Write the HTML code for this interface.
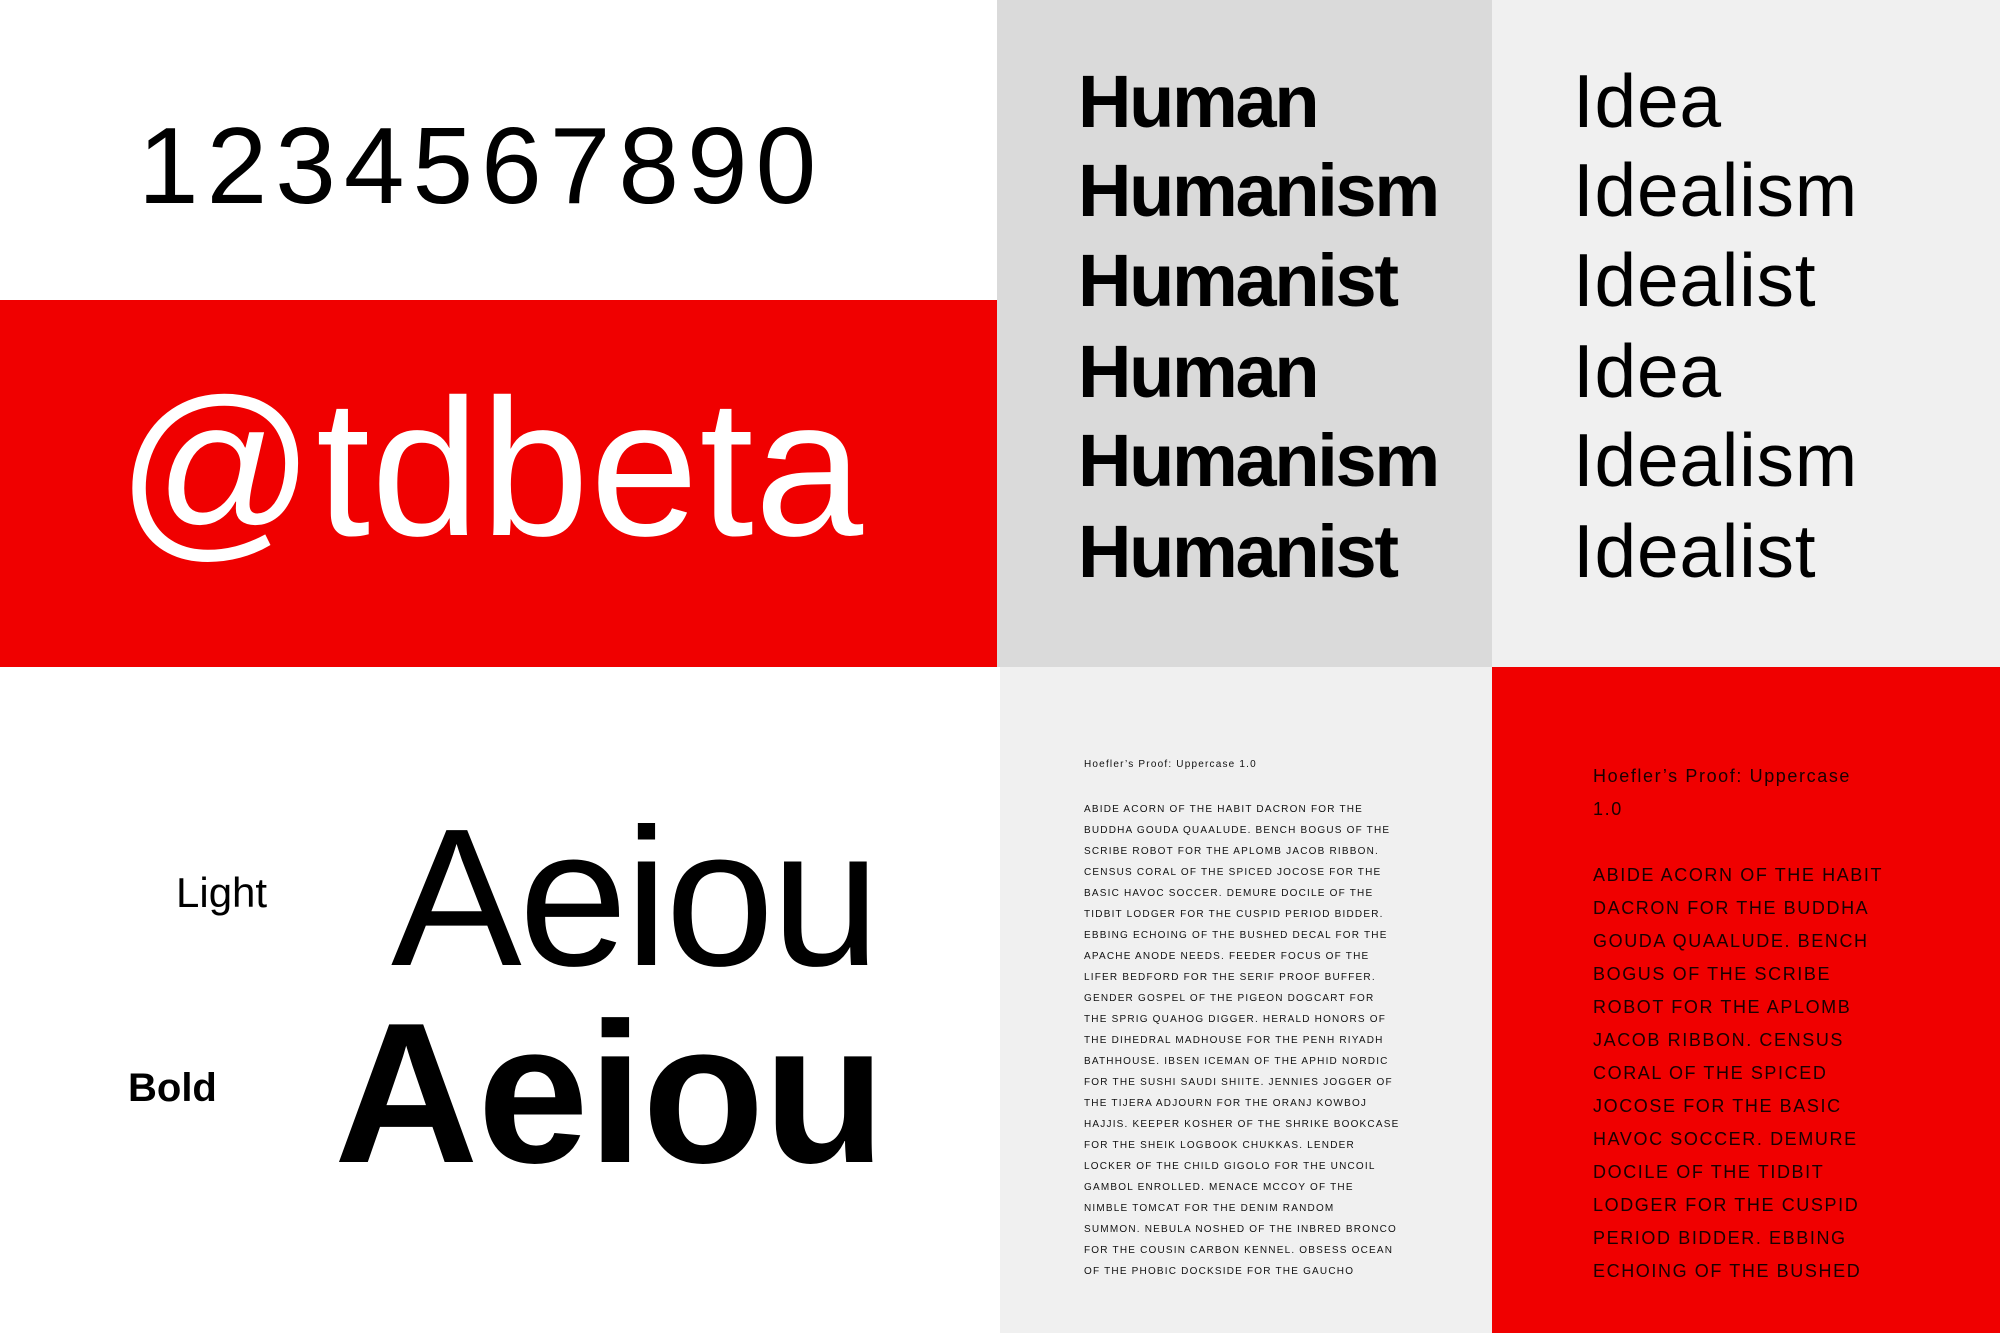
<!DOCTYPE html>
<html><head><meta charset="utf-8"><style>
html,body{margin:0;padding:0;}
body{width:2000px;height:1333px;position:relative;overflow:hidden;background:#fff;font-family:"Liberation Sans",sans-serif;color:#000;}
.a{position:absolute;white-space:nowrap;line-height:1;}
.bg{position:absolute;}
.h{font-weight:bold;font-size:74px;letter-spacing:-2.3px;left:1078px;}
.i{font-size:75px;letter-spacing:0.7px;left:1573px;}
.g{position:absolute;left:1084px;font-size:10px;line-height:21px;letter-spacing:1.2px;white-space:nowrap;color:#111;}
.r{position:absolute;left:1593px;font-size:18px;line-height:33px;letter-spacing:1.6px;white-space:nowrap;color:#1a0000;}
</style></head><body>
<div class="bg" style="left:0;top:300px;width:1000px;height:367px;background:#f00000"></div>
<div class="bg" style="left:997px;top:0;width:495px;height:667px;background:#dadada"></div>
<div class="bg" style="left:1492px;top:0;width:508px;height:667px;background:#f0f0f0"></div>
<div class="bg" style="left:1000px;top:667px;width:492px;height:666px;background:#f0f0f0"></div>
<div class="bg" style="left:1492px;top:667px;width:508px;height:666px;background:#f00000"></div>

<div class="a" style="left:138px;top:112px;font-size:109px;letter-spacing:8px">1234567890</div>
<div class="a" style="left:117px;top:371px;font-size:195px;letter-spacing:1px;color:#fff">@tdbeta</div>

<div class="a h" style="top:65px">Human</div>
<div class="a h" style="top:154px">Humanism</div>
<div class="a h" style="top:244px">Humanist</div>
<div class="a h" style="top:335px">Human</div>
<div class="a h" style="top:424px">Humanism</div>
<div class="a h" style="top:515px">Humanist</div>

<div class="a i" style="top:64px">Idea</div>
<div class="a i" style="top:153px">Idealism</div>
<div class="a i" style="top:243px">Idealist</div>
<div class="a i" style="top:334px">Idea</div>
<div class="a i" style="top:423px">Idealism</div>
<div class="a i" style="top:514px">Idealist</div>

<div class="a" style="left:176px;top:872px;font-size:42px">Light</div>
<div class="a" style="left:391px;top:800px;font-size:196px;letter-spacing:-3px">Aeiou</div>
<div class="a" style="left:128px;top:1068px;font-size:40px;font-weight:bold">Bold</div>
<div class="a" style="left:334px;top:994px;font-size:200px;font-weight:bold;letter-spacing:-1px">Aeiou</div>

<div class="g" style="top:754px">Hoefler’s Proof: Uppercase 1.0</div>
<div class="g" style="top:799px">ABIDE ACORN OF THE HABIT DACRON FOR THE<br>BUDDHA GOUDA QUAALUDE. BENCH BOGUS OF THE<br>SCRIBE ROBOT FOR THE APLOMB JACOB RIBBON.<br>CENSUS CORAL OF THE SPICED JOCOSE FOR THE<br>BASIC HAVOC SOCCER. DEMURE DOCILE OF THE<br>TIDBIT LODGER FOR THE CUSPID PERIOD BIDDER.<br>EBBING ECHOING OF THE BUSHED DECAL FOR THE<br>APACHE ANODE NEEDS. FEEDER FOCUS OF THE<br>LIFER BEDFORD FOR THE SERIF PROOF BUFFER.<br>GENDER GOSPEL OF THE PIGEON DOGCART FOR<br>THE SPRIG QUAHOG DIGGER. HERALD HONORS OF<br>THE DIHEDRAL MADHOUSE FOR THE PENH RIYADH<br>BATHHOUSE. IBSEN ICEMAN OF THE APHID NORDIC<br>FOR THE SUSHI SAUDI SHIITE. JENNIES JOGGER OF<br>THE TIJERA ADJOURN FOR THE ORANJ KOWBOJ<br>HAJJIS. KEEPER KOSHER OF THE SHRIKE BOOKCASE<br>FOR THE SHEIK LOGBOOK CHUKKAS. LENDER<br>LOCKER OF THE CHILD GIGOLO FOR THE UNCOIL<br>GAMBOL ENROLLED. MENACE MCCOY OF THE<br>NIMBLE TOMCAT FOR THE DENIM RANDOM<br>SUMMON. NEBULA NOSHED OF THE INBRED BRONCO<br>FOR THE COUSIN CARBON KENNEL. OBSESS OCEAN<br>OF THE PHOBIC DOCKSIDE FOR THE GAUCHO</div>

<div class="r" style="top:760px">Hoefler’s Proof: Uppercase<br>1.0</div>
<div class="r" style="top:859px">ABIDE ACORN OF THE HABIT<br>DACRON FOR THE BUDDHA<br>GOUDA QUAALUDE. BENCH<br>BOGUS OF THE SCRIBE<br>ROBOT FOR THE APLOMB<br>JACOB RIBBON. CENSUS<br>CORAL OF THE SPICED<br>JOCOSE FOR THE BASIC<br>HAVOC SOCCER. DEMURE<br>DOCILE OF THE TIDBIT<br>LODGER FOR THE CUSPID<br>PERIOD BIDDER. EBBING<br>ECHOING OF THE BUSHED</div>
</body></html>
